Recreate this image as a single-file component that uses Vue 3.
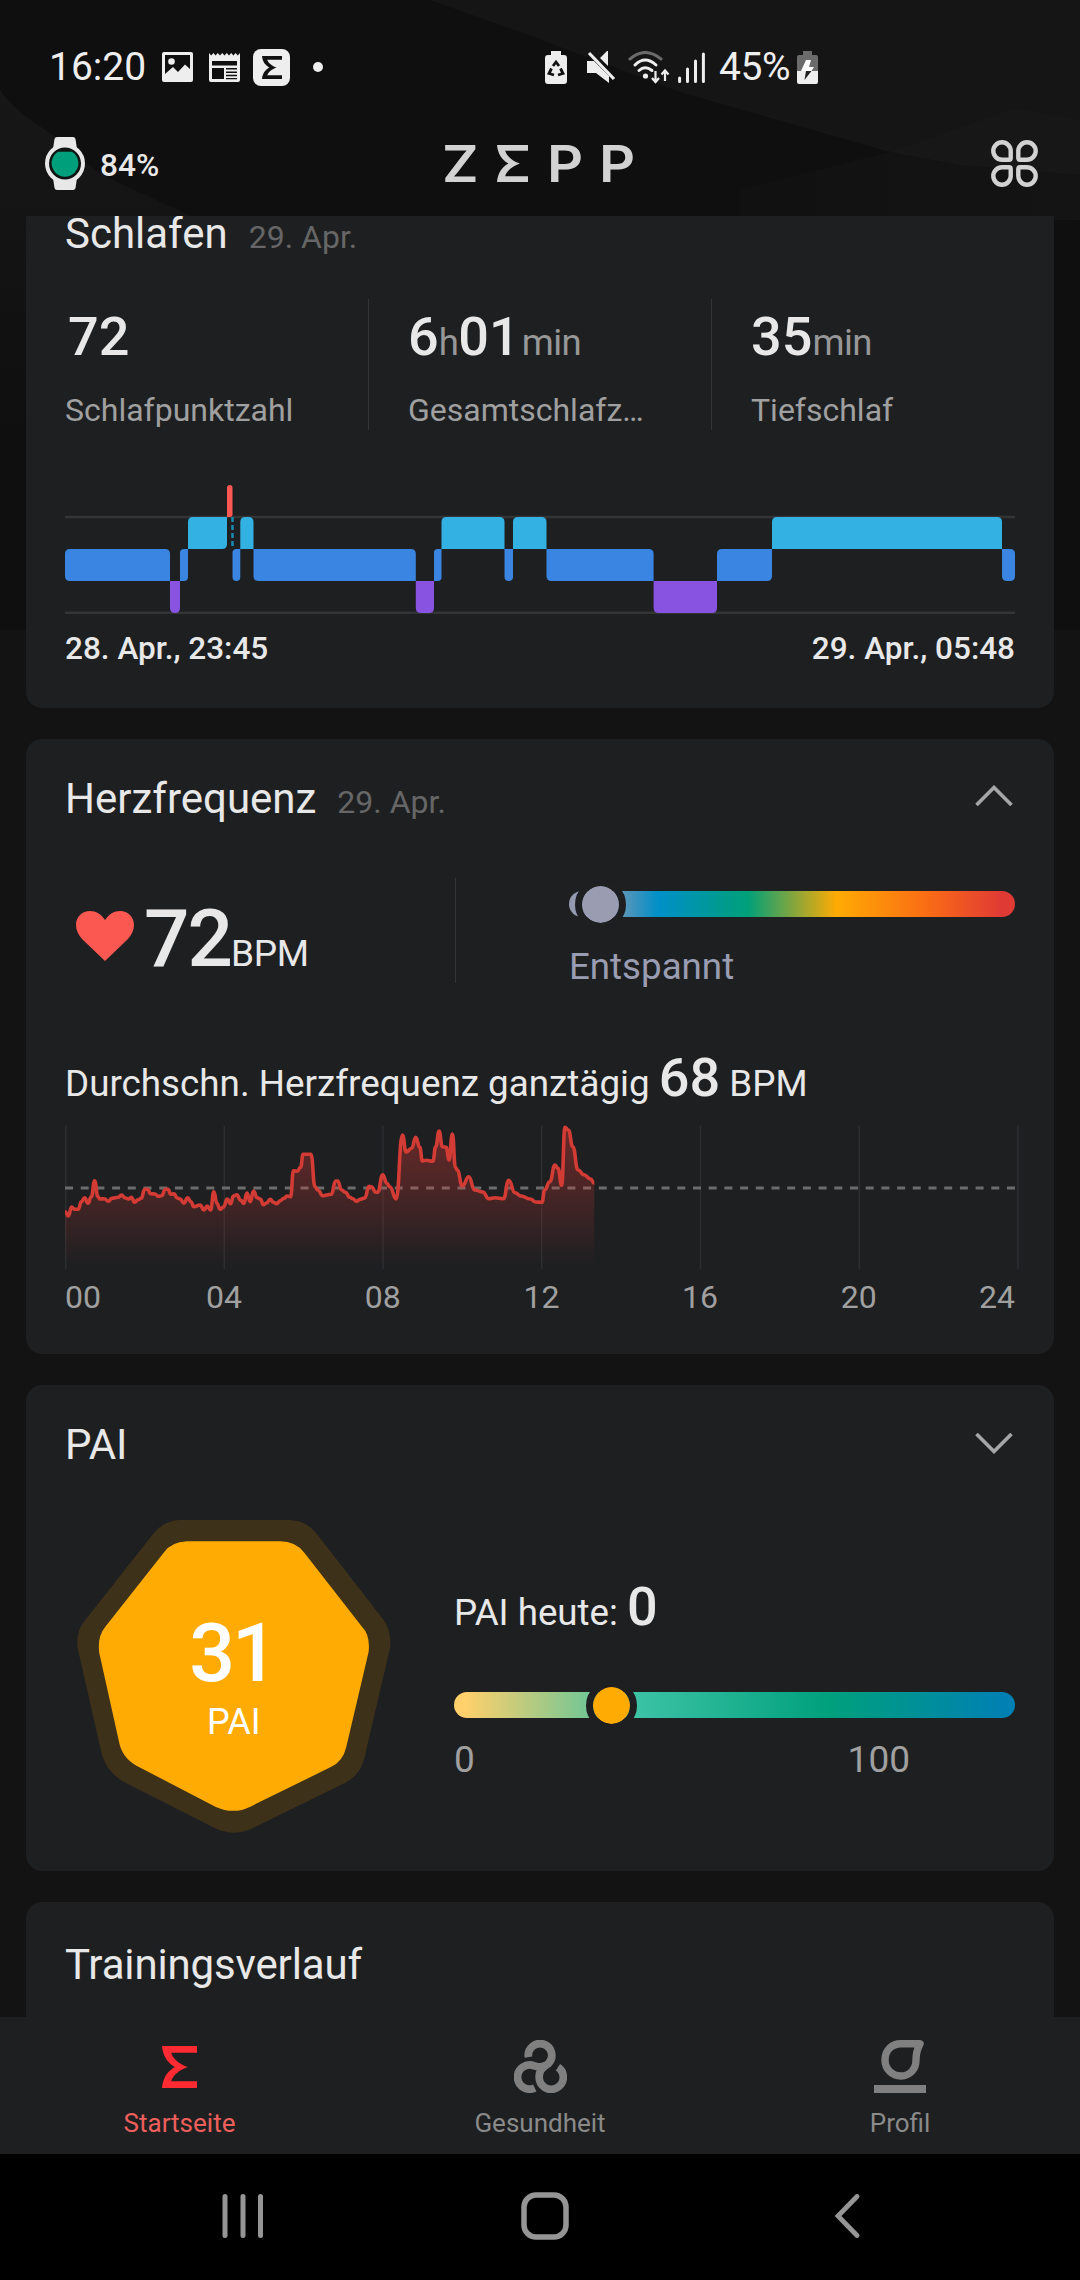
<template>
  <div class="screen">
    <svg class="backdrop" width="1080" height="630" viewBox="0 0 1080 630">
      <defs>
        <linearGradient id="leftFade" x1="0" y1="0" x2="0" y2="1">
          <stop offset="0" stop-color="#171717" />
          <stop offset="1" stop-color="#0f0f0f" />
        </linearGradient>
        <linearGradient id="beam" x1="0" y1="0" x2="1" y2="0">
          <stop offset="0" stop-color="#111" />
          <stop offset="1" stop-color="#141414" />
        </linearGradient>
      </defs>
      <rect width="1080" height="630" fill="#0f0f0f" />
      <path d="M430 0H1080V190L890 152L680 92L520 32Z" fill="#151515" />
      <path d="M740 190L890 152L1080 170V220H740Z" fill="url(#beam)" />
      <path d="M890 152L1015 108L1080 120V175L960 165Z" fill="#171717" />
      <path d="M0 90C20 120 50 128 70 150C100 180 150 195 190 216H60V430H0Z" fill="url(#leftFade)" />
    </svg>

    <header class="status-bar">
      <div class="status-left">
        <span class="clock">16:20</span>
        <svg class="i-image" width="31" height="30" viewBox="0 0 31 30">
          <path fill-rule="evenodd" fill="#eee" d="M2 0H29Q31 0 31 2V28Q31 30 29 30H2Q0 30 0 28V2Q0 0 2 0ZM3 3V22L11 15L16 20L23 12.500L28 17V3Z" />
          <circle cx="9.500" cy="9.500" r="3.300" fill="#eee" />
        </svg>
        <svg class="i-news" width="31" height="29" viewBox="0 0 31 29">
          <path fill-rule="evenodd" fill="#eee" d="M0 0L2.200 2.500L4.400 0L6.600 2.500L8.800 0L11 2.500L13.200 0L15.500 2.500L17.800 0L20 2.500L22.200 0L24.400 2.500L26.600 0L28.800 2.500L31 0V27Q31 29 29 29H2Q0 29 0 27ZM3 8V12.500H28V8ZM3 15V26H15V15ZM17 15V16.500H28V15ZM17 18.500V20H28V18.500ZM17 21.800V23.200H28V21.800ZM17 25V26.200H28V25Z" />
        </svg>
        <span class="i-zepp">
          <svg width="20" height="23" viewBox="0 0 103 126" preserveAspectRatio="none"><path :d="zeppMark" fill="#111" /></svg>
        </span>
        <span class="more-dot"></span>
      </div>
      <div class="status-right">
        <svg width="22" height="33" viewBox="0 0 22 33">
          <path fill="#eee" d="M6 0H16V4H19Q22 4 22 7V30Q22 33 19 33H3Q0 33 0 30V7Q0 4 3 4H6Z" />
          <g fill="none" stroke="#111" stroke-width="2.800">
            <path d="M8 15L11 11L14 15" />
            <path d="M15.500 17.500L18 22.500L13 24" />
            <path d="M6.500 17.500L4 22.500L9 24" />
          </g>
        </svg>
        <svg class="i-mute" width="29" height="32" viewBox="0 0 29 32">
          <path fill="#eee" d="M0 10H7L22 25V32L9 22H0ZM13 7L20 0H21V15Z" />
          <path d="M2 2L27 28" stroke="#eee" stroke-width="3.200" />
        </svg>
        <svg class="i-wifi" width="42" height="33" viewBox="0 0 42 33">
          <g fill="none" stroke="#eee" stroke-width="3" stroke-linecap="round">
            <path d="M2 8Q17 -5 33 8" stroke="#6b6b6b" />
            <path d="M7 14Q17 4 28 14" />
            <path d="M11 19.500Q17 14 24 19.500" />
          </g>
          <circle cx="17.500" cy="25" r="2.600" fill="#eee" />
          <path d="M27.500 20V30M24 27L27.500 31L31 27M37 30V20M33.500 23.500L37 19.500L40.500 23.500" fill="none" stroke="#eee" stroke-width="2.200" />
        </svg>
        <svg class="i-signal" width="27" height="31" viewBox="0 0 27 31">
          <path d="M1.600 26V29.500M9.500 17V29.500M17.500 9V29.500M25.400 2V29.500" stroke="#eee" stroke-width="3" stroke-linecap="round" />
        </svg>
        <span class="percent">45%</span>
        <svg width="21" height="33" viewBox="0 0 21 33">
          <path fill="#6b6b6b" d="M6 0H15V4H19Q21 4 21 6V20H0V6Q0 4 2 4H6Z" />
          <path fill="#eee" d="M0 20H21V31Q21 33 19 33H2Q0 33 0 31Z" />
          <path fill="#fff" d="M9 9H14L12 16H17L14.500 20H4Z" />
          <path fill="#222" d="M9 20H14.500L7.500 29Z" />
        </svg>
      </div>
    </header>

    <div class="app-bar">
      <div class="device">
        <svg width="40" height="53" viewBox="0 0 40 53">
          <path fill="#e8e8e8" d="M12 0H28Q30 0 30.500 2L32 12H8L9.500 2Q10 0 12 0ZM8 41H32L30.500 51Q30 53 28 53H12Q10 53 9.500 51Z" />
          <circle cx="20" cy="26.500" r="18" fill="#101513" stroke="#e8e8e8" stroke-width="4" />
          <path fill="#009f7b" d="M13 14.800H27A13.400 13.400 0 1 1 13 14.800Z" />
        </svg>
        <span class="device-level">84%</span>
      </div>
      <div class="brand">
        <span>Z</span>
        <svg width="31" height="37" viewBox="0 0 103 126" preserveAspectRatio="none"><path :d="zeppMark" fill="#d2d2d2" /></svg>
        <span>P</span>
        <span>P</span>
      </div>
      <svg class="apps" width="47" height="47" viewBox="0 0 47 47">
        <path
          v-for="angle in [0, 90, 180, 270]"
          :key="angle"
          :transform="`rotate(${angle} 23.5 23.5)`"
          d="M11 2.300A8.700 8.700 0 0 0 11 19.700H18Q19.700 19.700 19.700 18V11A8.700 8.700 0 0 0 11 2.300Z"
          fill="none"
          stroke="#d2d2d2"
          stroke-width="4.400"
        />
      </svg>
    </div>

    <main class="feed">
      <section class="card sleep">
        <div class="card-head">
          <h2>Schlafen</h2>
          <span class="date">29. Apr.</span>
        </div>
        <div class="stats">
          <div class="stat">
            <p class="stat-value first">72</p>
            <p class="stat-label">Schlafpunktzahl</p>
          </div>
          <div class="stat">
            <p class="stat-value">6<small>h</small>01<small class="spaced">min</small></p>
            <p class="stat-label">Gesamtschlafz…</p>
          </div>
          <div class="stat">
            <p class="stat-value">35<small>min</small></p>
            <p class="stat-label">Tiefschlaf</p>
          </div>
        </div>
        <svg class="hypnogram" width="950" height="129" viewBox="0 0 950 129">
          <path d="M0 32H950M0 127.700H950" stroke="#333436" stroke-width="2.400" />
          <path v-for="(bar, i) in sleepBars" :key="i" :d="bar.d" :fill="bar.color" />
          <path d="M167.500 32V64" stroke="#178db5" stroke-width="2.500" stroke-dasharray="5 3" />
        </svg>
        <div class="range">
          <span>28. Apr., 23:45</span>
          <span>29. Apr., 05:48</span>
        </div>
      </section>

      <section class="card heart">
        <div class="card-head">
          <h2>Herzfrequenz</h2>
          <span class="date">29. Apr.</span>
          <svg class="chevron" width="38" height="21" viewBox="0 0 38 21"><path d="M1.500 20L19 2.500L36.500 20" /></svg>
        </div>
        <div class="heart-row">
          <div class="bpm">
            <svg class="heart-icon" width="58" height="50" viewBox="0 0 58 50">
              <path fill="#fa5850" d="M29 50L6 28C2 23 0 19 0 14C0 6 6 0 14 0C20 0 25 3 29 9C33 3 38 0 44 0C52 0 58 6 58 14C58 19 56 23 52 28Z" />
            </svg>
            <p class="bpm-value">72<small>BPM</small></p>
          </div>
          <div class="zone">
            <div class="track zone-track"><i class="knob"></i></div>
            <p class="zone-name">Entspannt</p>
          </div>
        </div>
        <p class="average">Durchschn. Herzfrequenz ganztägig <b>68</b> BPM</p>
        <svg class="hr-chart" width="955" height="145" viewBox="0 0 955 145">
          <defs>
            <linearGradient id="hrFill" gradientUnits="userSpaceOnUse" x1="0" y1="0" x2="0" y2="140">
              <stop offset="0" stop-color="#e03a35" stop-opacity=".4" />
              <stop offset=".5" stop-color="#e03a35" stop-opacity=".21" />
              <stop offset="1" stop-color="#e03a35" stop-opacity="0" />
            </linearGradient>
          </defs>
          <path d="M.7 1V144M159.300 1V144M318 1V144M476.700 1V144M635.500 1V144M794.300 1V144M953 1V144" stroke="#2c2e30" stroke-width="1.500" />
          <path d="M0 63H950" stroke="#6c6c6c" stroke-width="2.800" stroke-dasharray="8 7.700" />
          <path :d="`${hrLine}V144H0Z`" fill="url(#hrFill)" />
          <path :d="hrLine" fill="none" stroke="#d33b35" stroke-width="3.600" stroke-linejoin="round" />
        </svg>
        <div class="axis">
          <span v-for="h in hours" :key="h">{{ h }}</span>
        </div>
      </section>

      <section class="card pai">
        <div class="card-head">
          <h2>PAI</h2>
          <svg class="chevron down" width="38" height="21" viewBox="0 0 38 21"><path d="M1.500 1L19 18.500L36.500 1" /></svg>
        </div>
        <div class="pai-body">
          <svg class="badge" width="314" height="314" viewBox="170 450 942 942">
            <path fill="#3d3119" d="M478 450H806Q856 450 888 490L1090 750Q1115 785 1109 835L1032 1165Q1020 1215 975 1238L690 1378Q640 1400 585 1375L315 1238Q262 1210 245 1155L172 835Q165 785 195 750L400 490Q430 452 478 450Z" />
            <path fill="#ffab04" d="M500 514H780Q825 514 852 548L1025 770Q1050 795 1045 845L978 1130Q968 1175 930 1192L690 1310Q640 1335 585 1310L350 1188Q305 1163 296 1115L237 850Q230 800 255 770L430 548Q452 516 500 514Z" />
            <text class="badge-score" x="635" y="933">31</text>
            <text class="badge-unit" x="640" y="1092">PAI</text>
          </svg>
          <div class="pai-today">
            <p class="today">PAI heute: <b>0</b></p>
            <div class="track pai-track"><i class="knob"></i></div>
            <div class="scale"><span>0</span><span>100</span></div>
          </div>
        </div>
      </section>

      <section class="card training">
        <div class="card-head">
          <h2>Trainingsverlauf</h2>
        </div>
      </section>
    </main>

    <nav class="tabs">
      <a class="tab active">
        <span class="tab-icon">
          <svg width="35" height="42" viewBox="0 0 103 126" preserveAspectRatio="none"><path :d="zeppMark" fill="#ff2a32" /></svg>
        </span>
        Startseite
      </a>
      <a class="tab">
        <span class="tab-icon">
          <svg width="53" height="53" viewBox="0 0 158 158">
            <g fill="none" stroke="#808080" stroke-width="23">
              <path d="M43 51A35 35 0 1 1 102 71Q74 88 75 110A36 36 0 1 0 131 81" />
              <path d="M62 143A36 36 0 1 1 60 77Q76 84 94 76" />
            </g>
          </svg>
        </span>
        Gesundheit
      </a>
      <a class="tab">
        <span class="tab-icon">
          <svg width="52" height="53" viewBox="0 0 52 53">
            <path d="M46 3.700H27C17 3.700 11 11 11 20C11 29 18 36 27 36C36 36 42 29 42 20C42 13 43.500 8.500 46 3.700Z" fill="none" stroke="#808080" stroke-width="7.400" stroke-linejoin="round" />
            <rect y="45" width="52" height="8" fill="#808080" />
          </svg>
        </span>
        Profil
      </a>
    </nav>

    <footer class="system-nav">
      <span><svg width="42" height="44" viewBox="0 0 42 44"><path d="M3 2.500V41.500M21 2.500V41.500M38.500 2.500V41.500" stroke-width="5" /></svg></span>
      <span><svg width="48" height="48" viewBox="0 0 48 48"><rect x="3" y="3" width="42" height="42" rx="12" stroke-width="5.500" /></svg></span>
      <span><svg width="26" height="44" viewBox="0 0 26 44"><path d="M23 2.500L4 22L23 41.500" stroke-width="4.800" /></svg></span>
    </footer>
  </div>
</template>

<script setup>
const zeppMark =
  'M0 0H103V20H27C32 38 52 55 76 63C52 71 32 88 27 106H103V126H0C2 100 14 76 38 63C14 50 2 26 0 0Z'

const hours = ['00', '04', '08', '12', '16', '20', '24']

// sleep stages: row 0 awake, 1 rem, 2 light, 3 deep
const stageColors = ['#fa5850', '#34b1e3', '#3a85e2', '#8853e0']
const stages = [
  [0, 105, 2], [105, 115, 3], [115, 123, 2], [123, 162, 1], [162, 167.5, 0],
  [167.5, 175.3, 2], [175.3, 188.5, 1], [188.5, 350.8, 2], [350.8, 369, 3],
  [369, 376.5, 2], [376.5, 439.5, 1], [439.5, 448, 2], [448, 481.5, 1],
  [481.5, 588.6, 2], [588.6, 652, 3], [652, 707, 2], [707, 937, 1], [937, 950, 2]
]

// a corner stays square where the neighbouring stage touches it
const sleepBars = stages.map(([x0, x1, row], i) => {
  const prev = i > 0 ? stages[i - 1][2] : row
  const next = i < stages.length - 1 ? stages[i + 1][2] : row
  const r = Math.min(5, (x1 - x0) / 2)
  const tl = prev < row && row - prev === 1 ? 0 : r
  const bl = prev > row && prev - row === 1 ? 0 : r
  const tr = next < row ? 0 : r
  const br = next > row && next - row === 1 ? 0 : r
  const y0 = row * 32
  const y1 = y0 + 32
  const d =
    `M${x0 + tl} ${y0}H${x1 - tr}Q${x1} ${y0} ${x1} ${y0 + tr}` +
    `V${y1 - br}Q${x1} ${y1} ${x1 - br} ${y1}H${x0 + bl}` +
    `Q${x0} ${y1} ${x0} ${y1 - bl}V${y0 + tl}Q${x0} ${y0} ${x0 + tl} ${y0}Z`
  return { d, color: stageColors[row] }
})

const samples = [
  [69, 545], [78, 558], [87, 531], [95, 538], [105, 538], [113, 515], [122, 503], [131, 520],
  [140, 500], [149, 452], [158, 500], [163, 507], [175, 506], [186, 514], [196, 505], [213, 502],
  [221, 495], [232, 504], [241, 507], [248, 502], [257, 517], [266, 509], [275, 505], [284, 478],
  [292, 478], [300, 491], [312, 492], [321, 499], [330, 497], [340, 478], [347, 478], [355, 493],
  [363, 491], [372, 504], [380, 507], [390, 520], [400, 503], [409, 515], [417, 530], [434, 525],
  [444, 540], [453, 528], [462, 540], [471, 485], [479, 520], [488, 538], [497, 531], [507, 507],
  [516, 521], [524, 498], [533, 494], [543, 510], [552, 520], [560, 489], [569, 515], [578, 483],
  [588, 503], [596, 507], [605, 524], [614, 518], [623, 508], [632, 517], [641, 521], [650, 512],
  [660, 505], [668, 498], [678, 500], [686, 422], [696, 424], [705, 412], [712, 373], [733, 373],
  [744, 470], [752, 481], [765, 497], [788, 493], [800, 453], [805, 453], [816, 480], [826, 487],
  [838, 502], [846, 506], [856, 514], [866, 508], [878, 504], [890, 469], [897, 471], [908, 487],
  [913, 487], [927, 434], [938, 460], [946, 470], [963, 507], [980, 315], [990, 366], [1005, 355],
  [1016, 322], [1027, 352], [1034, 393], [1044, 391], [1062, 394], [1070, 350], [1079, 303],
  [1088, 350], [1098, 352], [1106, 390], [1115, 312], [1123, 412], [1128, 420], [1142, 468],
  [1159, 440], [1175, 480], [1197, 486], [1213, 506], [1230, 503], [1253, 506], [1267, 451],
  [1284, 488], [1300, 498], [1325, 507], [1340, 516], [1357, 517], [1364, 480], [1378, 455],
  [1392, 405], [1400, 415], [1410, 466], [1419, 292], [1428, 300], [1440, 350], [1454, 420],
  [1470, 434], [1488, 447], [1498, 460]
]

const points = samples.map(([t, v]) => [(t - 69) / 2.7, (v - 285) / 3])
const hrLine = points.reduce((d, [x, y], i) => {
  if (i === 0) return `M${x.toFixed(1)} ${y.toFixed(1)}`
  const [px, py] = points[i - 1]
  const mx = ((px + x) / 2).toFixed(1)
  return `${d}C${mx} ${py.toFixed(1)} ${mx} ${y.toFixed(1)} ${x.toFixed(1)} ${y.toFixed(1)}`
}, '')
</script>

<style>
body {
  background: #131313;
}
</style>

<style scoped>
.screen {
  position: relative;
  width: 1080px;
  height: 2280px;
  overflow: hidden;
  background: #131313;
  color: #e8e8e8;
  font-family: Roboto, "Noto Sans", sans-serif;
  display: flex;
  flex-direction: column;
}

.backdrop {
  position: absolute;
  top: 0;
  left: 0;
}

svg {
  display: block;
  flex: none;
}

p,
h2 {
  margin: 0;
  font-weight: 400;
}

.status-bar {
  position: relative;
  height: 98px;
  padding: 36px 0 0 49px;
  box-sizing: border-box;
  display: flex;
  align-items: center;
  color: #eee;
  font-size: 39px;
}

.status-left,
.status-right {
  display: flex;
  align-items: center;
}

.status-left {
  width: 496px;
}

.clock {
  width: 113px;
}

.i-news {
  margin-left: 16px;
}

.i-zepp {
  width: 37px;
  height: 37px;
  margin-left: 13px;
  border-radius: 8px;
  background: #eee;
  display: flex;
  align-items: center;
  justify-content: center;
}

.more-dot {
  width: 10px;
  height: 10px;
  margin-left: 23px;
  border-radius: 50%;
  background: #eee;
}

.i-mute {
  margin-left: 20px;
}

.i-wifi {
  margin-left: 12px;
}

.i-signal {
  margin-left: 8px;
}

.percent {
  width: 78px;
  margin-left: 14px;
  letter-spacing: -0.4px;
}

.app-bar {
  position: relative;
  height: 118px;
  padding: 13px 42px 0 45px;
  box-sizing: border-box;
  display: grid;
  grid-template-columns: 400px 1fr auto;
  align-items: center;
}

.device {
  display: flex;
  align-items: center;
  gap: 15px;
}

.device-level {
  padding-top: 3px;
  font-size: 31.6px;
  font-weight: 500;
}

.brand {
  display: flex;
  align-items: center;
  color: #d2d2d2;
  font-family: Inter, Roboto, sans-serif;
  font-size: 51px;
  font-weight: 600;
  line-height: 1;
}

.brand span {
  width: 52px;
  transform: scaleX(1.1);
  transform-origin: 0 50%;
}

.brand span:first-child {
  width: 54px;
  margin-left: -3px;
}

.brand svg {
  margin-left: 1px;
  margin-right: 19px;
}

.feed {
  position: relative;
  height: 1801px;
  padding: 0 26px;
  overflow: hidden;
}

.card {
  height: 400px;
  margin-bottom: 31px;
  padding: 0 39px;
  box-sizing: border-box;
  border-radius: 16px;
  background: #1e1f21;
}

.sleep {
  height: 534px;
  margin-top: -42px;
}

.heart {
  height: 615px;
}

.pai {
  height: 486px;
}

.training {
  padding-top: 3px;
}

.card-head {
  height: 119px;
  line-height: 119px;
  display: flex;
  align-items: baseline;
}

.card-head h2 {
  font-size: 42px;
}

.training h2 {
  letter-spacing: -0.15px;
}

.date {
  margin-left: 21px;
  color: #666;
  font-size: 32px;
}

.chevron {
  align-self: flex-start;
  margin: 46px 2px 0 auto;
  fill: none;
  stroke: #a6a6a6;
  stroke-width: 3.6;
}

.chevron.down {
  margin-top: 48px;
}

.stats {
  height: 131px;
  margin-top: 6px;
  display: grid;
  grid-template-columns: 303px 343px 303px;
}

.stat + .stat {
  padding-left: 39px;
  border-left: 1px solid #333436;
}

.stat-value {
  font-size: 54px;
  font-weight: 500;
  line-height: 75px;
  white-space: nowrap;
}

.stat-value.first {
  padding-left: 3px;
}

.stat-value small {
  color: #979797;
  font-size: 36.5px;
  font-weight: 400;
  letter-spacing: -0.5px;
  line-height: 0;
}

.stat-value .spaced {
  margin-left: 2px;
}

.stat-label {
  margin-top: 16px;
  color: #a0a0a0;
  font-size: 32px;
  line-height: 40px;
  white-space: nowrap;
}

.hypnogram {
  margin-top: 55px;
}

.range {
  margin-top: 15px;
  display: flex;
  justify-content: space-between;
  font-size: 31.5px;
  font-weight: 500;
  line-height: 40px;
}

.heart-row {
  height: 105px;
  margin-top: 20px;
  display: flex;
}

.bpm {
  width: 391px;
  box-sizing: border-box;
  padding-left: 11px;
  border-right: 1px solid #333436;
  display: flex;
}

.heart-icon {
  margin-top: 33px;
}

.bpm-value {
  margin-left: 10px;
  font-size: 80px;
  font-weight: 500;
  letter-spacing: -2px;
  line-height: 123px;
}

.bpm-value small {
  font-size: 37px;
  font-weight: 400;
  letter-spacing: -0.3px;
  line-height: 0;
}

.zone {
  width: 446px;
  margin-left: 113px;
  padding-top: 13px;
}

.track {
  position: relative;
  height: 26px;
  border-radius: 13px;
}

.zone-track {
  background: linear-gradient(90deg, #949ab0 0, #949ab0 7%, #008fc8 20%, #00a07a 40%, #ffab04 60%, #fa6d14 80%, #e03a35 97%);
}

.pai-track {
  margin-top: 47px;
  background: linear-gradient(90deg, #ffd06b 2%, #3bc2a5 33%, #00a07c 67%, #0080b3 98%);
}

.knob {
  position: absolute;
  top: -12.5px;
  left: 6px;
  width: 37px;
  height: 37px;
  border: 7.5px solid #1e1f21;
  border-radius: 50%;
  background: #9a9db2;
  background-clip: padding-box;
}

.pai-track .knob {
  left: 132px;
  background-color: #ffab04;
}

.zone-name {
  margin-top: 25px;
  color: #9a9db2;
  font-size: 36.7px;
  line-height: 50px;
}

.average {
  height: 80px;
  margin-top: 61px;
  font-size: 36.8px;
  line-height: 80px;
  white-space: nowrap;
}

.average b,
.today b {
  font-size: 54px;
  font-weight: 500;
  line-height: 0;
}

.hr-chart {
  margin-top: 1px;
}

.axis {
  display: flex;
  color: #a0a0a0;
  font-size: 32px;
  line-height: 55px;
}

.axis span {
  width: 158.8px;
  text-align: center;
}

.axis span:first-child {
  width: 79.8px;
  text-align: left;
}

.axis span:last-child {
  width: 77px;
  text-align: right;
}

.pai-body {
  display: flex;
}

.badge {
  margin: 16px 0 0 11.5px;
}

.badge-score,
.badge-unit {
  fill: #fff;
  text-anchor: middle;
}

.badge-score {
  font-size: 242px;
  font-weight: 500;
  letter-spacing: -9px;
}

.badge-unit {
  font-size: 108px;
}

.pai-today {
  width: 561px;
  margin-left: 63.5px;
  padding-top: 76px;
}

.today {
  height: 65px;
  font-size: 36.7px;
  line-height: 66px;
}

.scale {
  padding: 12px 105px 0 0;
  display: flex;
  justify-content: space-between;
  color: #a0a0a0;
  font-size: 37px;
  line-height: 60px;
}

.tabs {
  position: relative;
  height: 137px;
  background: #1e1f21;
  display: grid;
  grid-template-columns: repeat(3, 1fr);
}

.tab {
  padding-top: 23px;
  display: flex;
  flex-direction: column;
  align-items: center;
  color: #8a8a8a;
  font-size: 26px;
  line-height: 40px;
}

.tab.active {
  padding-right: 1px;
  color: #ee5f5b;
}

.tab-icon {
  height: 53px;
  margin-bottom: 10px;
  display: flex;
  align-items: center;
}

.system-nav {
  position: relative;
  height: 126px;
  padding-left: 92px;
  background: #000;
  display: flex;
}

.system-nav span {
  width: 302px;
  height: 123px;
  display: flex;
  align-items: center;
  justify-content: center;
}

.system-nav svg {
  fill: none;
  stroke: #959595;
  stroke-linecap: round;
}
</style>
